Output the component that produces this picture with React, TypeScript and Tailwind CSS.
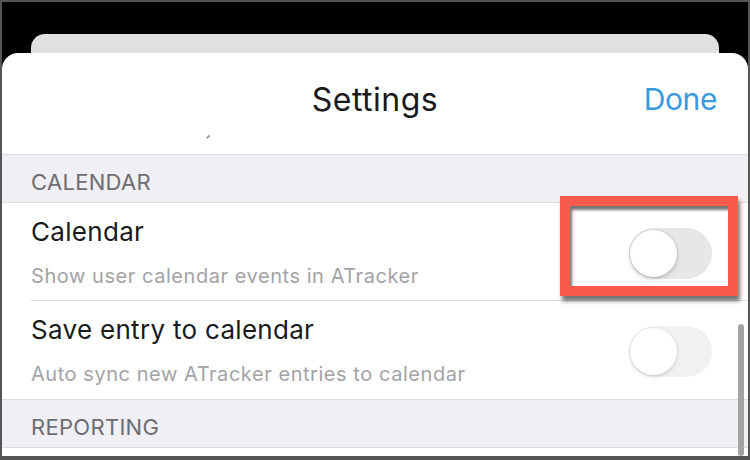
import React from 'react';

type Row = { title: string; subtitle: string; faded?: boolean };

const ROWS: Row[] = [
  { title: 'Calendar', subtitle: 'Show user calendar events in ATracker' },
  { title: 'Save entry to calendar', subtitle: 'Auto sync new ATracker entries to calendar', faded: true },
];

function Toggle({ faded }: { faded?: boolean }) {
  return (
    <div
      className={`relative mt-[11px] w-[83px] h-[51px] rounded-full flex-shrink-0 ${faded ? 'bg-[#f1f1f2]' : 'bg-[#e7e7e9]'}`}
    >
      <span
        className={`absolute left-[1px] top-[2px] w-[47px] h-[47px] rounded-full bg-white ${
          faded
            ? 'shadow-[0_2px_4px_rgba(0,0,0,0.12),0_0_0_1px_rgba(0,0,0,0.03)]'
            : 'shadow-[0_2px_5px_rgba(0,0,0,0.2),0_0_0_1px_rgba(0,0,0,0.05)]'
        }`}
      />
    </div>
  );
}

function SectionHeader({ label }: { label: string }) {
  return (
    <div className="h-[48px] bg-[#efeff4] border-b border-[#dedee2] flex items-end pb-[7px] pl-[29px]">
      <span className="text-[22px] leading-[26px] text-[#6d6d72] tracking-[0.3px]">{label}</span>
    </div>
  );
}

export default function App() {
  return (
    <div
      className="w-[750px] h-[460px] bg-black border-t-2 border-l-2 border-r-2 border-b-4 border-[#555] flex flex-col overflow-hidden"
      style={{ fontFamily: 'Inter, "Noto Sans", sans-serif' }}
    >
      {/* card behind the sheet */}
      <div className="mt-[32px] mx-[29px] h-[19px] rounded-t-[14px] bg-[#e0e0e0] flex-shrink-0" />

      {/* sheet */}
      <div className="relative flex-1 bg-white rounded-t-[16px] flex flex-col overflow-hidden">
        {/* Header */}
        <div className="relative h-[102px] flex-shrink-0 border-b border-[#dcdce0] flex items-start justify-center pt-[23px]">
          <h1 className="text-[32px] text-[#1a1a1c] tracking-[0.5px]">Settings</h1>
          <span className="absolute right-[31px] top-[24px] text-[30px] text-[#3a9ae0] tracking-[-0.4px]">Done</span>
          <span className="absolute left-[204px] top-[83px] w-[4px] h-[1.5px] bg-[#9a9a9a] -rotate-45" />
        </div>

        <SectionHeader label="CALENDAR" />

        {ROWS.map((row, i) => (
          <div key={row.title} className="pl-[29px]">
            <div
              className={`h-[98px] flex items-start justify-between pr-[36px] pt-[14px] ${
                i < ROWS.length - 1 ? 'border-b border-[#dcdce0]' : ''
              }`}
            >
              <div className="flex flex-col">
                <span className="text-[26px] leading-[30px] text-[#1a1a1c] tracking-[0.3px]">{row.title}</span>
                <span className="mt-[17px] text-[20px] leading-[24px] text-[#a3a3a7] tracking-[0.55px]">
                  {row.subtitle}
                </span>
              </div>
              <Toggle faded={row.faded} />
            </div>
          </div>
        ))}

        <div className="border-t border-[#dcdce0]">
          <SectionHeader label="REPORTING" />
        </div>

        {/* scroll indicator */}
        <span className="absolute right-[4px] top-[271px] bottom-0 w-[6px] rounded-full bg-[#a3a3a3]" />

        {/* highlight box */}
        <span className="absolute left-[558px] top-[143px] w-[178px] h-[100px] border-[10px] border-[#fa5a4c] shadow-[2px_5px_4px_rgba(0,0,0,0.55),inset_2px_4px_3px_rgba(0,0,0,0.55)]" />
      </div>
    </div>
  );
}
